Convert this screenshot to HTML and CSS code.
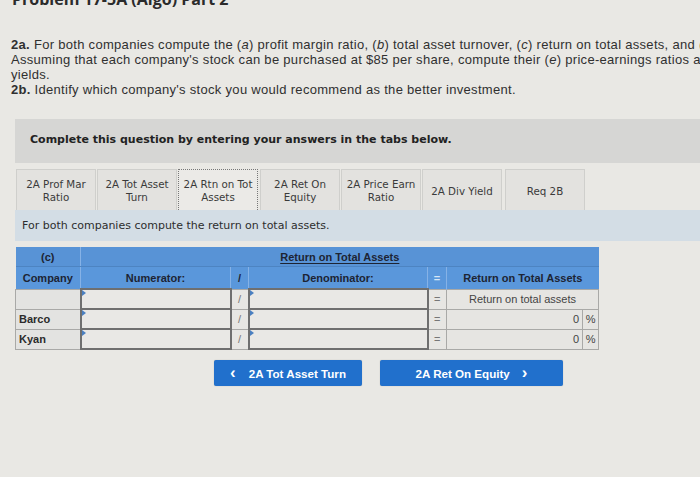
FILE: index.html
```html
<!DOCTYPE html>
<html>
<head>
<meta charset="utf-8">
<link rel="stylesheet" href="styles.css">
</head>
<body>
<div class="page">
  <h1 class="title">Problem 17-5A (Algo) Part 2</h1>
  <p class="intro">
    <b>2a.</b> For both companies compute the (<i>a</i>) profit margin ratio, (<i>b</i>) total asset turnover, (<i>c</i>) return on total assets, and (<i>d</i>) return on common stockholders' equity.<br>
    Assuming that each company's stock can be purchased at $85 per share, compute their (<i>e</i>) price-earnings ratios and dividend<br>
    yields.<br>
    <b>2b.</b> Identify which company's stock you would recommend as the better investment.
  </p>

  <div class="widget">
    <div class="instructions">Complete this question by entering your answers in the tabs below.</div>

    <div class="tabs">
      <div class="tab">2A Prof Mar<br>Ratio</div>
      <div class="tab">2A Tot Asset<br>Turn</div>
      <div class="tab active">2A Rtn on Tot<br>Assets</div>
      <div class="tab">2A Ret On<br>Equity</div>
      <div class="tab">2A Price Earn<br>Ratio</div>
      <div class="tab">2A Div Yield</div>
      <div class="tab">Req 2B</div>
    </div>

    <div class="prompt">For both companies compute the return on total assets.</div>

    <table class="grid">
      <colgroup>
        <col class="c-co"><col class="c-num"><col class="c-op"><col class="c-den"><col class="c-eq"><col class="c-res"><col class="c-pct">
      </colgroup>
      <tr class="h1">
        <th class="sep">(c)</th>
        <th colspan="6"><u>Return on Total Assets</u></th>
      </tr>
      <tr class="h2">
        <th class="sep">Company</th>
        <th class="sep">Numerator:</th>
        <th class="sep">/</th>
        <th class="sep">Denominator:</th>
        <th class="sep eqh">=</th>
        <th colspan="2">Return on Total Assets</th>
      </tr>
      <tr>
        <td class="co"></td>
        <td class="in"><span class="flag"></span></td>
        <td class="op">/</td>
        <td class="in"><span class="flag"></span></td>
        <td class="op">=</td>
        <td class="lbl" colspan="2">Return on total assets</td>
      </tr>
      <tr>
        <td class="co">Barco</td>
        <td class="in"><span class="flag"></span></td>
        <td class="op">/</td>
        <td class="in"><span class="flag"></span></td>
        <td class="op">=</td>
        <td class="val">0</td>
        <td class="pct">%</td>
      </tr>
      <tr>
        <td class="co">Kyan</td>
        <td class="in"><span class="flag"></span></td>
        <td class="op">/</td>
        <td class="in"><span class="flag"></span></td>
        <td class="op">=</td>
        <td class="val">0</td>
        <td class="pct">%</td>
      </tr>
    </table>

    <div class="nav">
      <button class="btn prev"><span class="chev">&lsaquo;</span>2A Tot Asset Turn</button>
      <button class="btn next">2A Ret On Equity<span class="chev">&rsaquo;</span></button>
    </div>
  </div>
</div>
</body>
</html>
```

FILE: styles.css
```css
html, body {
  margin: 0;
  padding: 0;
  background: #e8e7e3;
  overflow: hidden;
}
.page {
  width: 700px;
  height: 477px;
  overflow: hidden;
  background: #e9e8e4;
  color: #2a2a2a;
}
.title {
  margin: -12px 0 0 12px;
  font-family: "Open Sans", "Liberation Sans", sans-serif;
  font-size: 16px;
  font-weight: 700;
  line-height: 22px;
  white-space: nowrap;
  color: #2b2b2b;
}
.intro {
  margin: 27px 0 0 11px;
  font-family: "Liberation Sans", Arial, sans-serif;
  font-size: 13px;
  letter-spacing: 0.3px;
  line-height: 15px;
  white-space: nowrap;
  color: #303030;
}
.intro b { font-weight: 700; }
.widget {
  margin: 22px 0 0 15px;
  width: 760px;
}
.instructions {
  background: #d6d6d4;
  height: 44px;
  padding-left: 15px;
  display: flex;
  align-items: center;
  font-family: "DejaVu Sans", Verdana, sans-serif;
  font-weight: 700;
  font-size: 11px;
  color: #222;
  padding-bottom: 4px;
  box-sizing: border-box;
}
.tabs {
  display: flex;
  gap: 1px;
  margin-top: 6px;
  padding-left: 1px;
  height: 41px;
}
.tab {
  width: 80px;
  box-sizing: border-box;
  border: 1px solid #cfcfcc;
  border-bottom: none;
  background: #e3e2df;
  display: flex;
  align-items: center;
  justify-content: center;
  text-align: center;
  font-family: "DejaVu Sans", Verdana, sans-serif;
  font-size: 10.3px;
  line-height: 13px;
  color: #3a3a3a;
  padding-top: 2px;
}
.tab.active {
  border: 1px dotted #777;
  border-bottom: none;
  background: #ebeae7;
}
.tab:nth-child(4) { margin-left: 1px; }
.tab:nth-child(6) { margin-left: 0; }
.tab:nth-child(7) { margin-left: 2px; }
.prompt {
  background: #d3dde5;
  height: 31px;
  padding-left: 7px;
  display: flex;
  align-items: center;
  font-family: "DejaVu Sans", Verdana, sans-serif;
  font-size: 11px;
  color: #2d2d2d;
}
.grid {
  margin-top: 6px;
  border-collapse: collapse;
  table-layout: fixed;
  width: 583px;
  font-family: "Liberation Sans", Arial, sans-serif;
  font-size: 11px;
  color: #1e1e1e;
}
.c-co { width: 65px; }
.c-num { width: 150px; }
.c-op { width: 18px; }
.c-den { width: 179px; }
.c-eq { width: 19px; }
.c-res { width: 136px; }
.c-pct { width: 16px; }
.grid th {
  background: #5a97db;
  font-weight: 700;
  padding: 0;
  color: #1d2433;
}
.grid .h1 th { height: 19px; border-bottom: 1px solid #4d84c2; background: #5893d6; }
.grid .h2 th { height: 21px; }
.grid th.sep { border-right: 1px solid #86b2e6; }
.grid th.eqh { color: #d6e6f6; }
.grid .h1 th u { text-decoration-thickness: 1px; text-underline-offset: 2px; }
.grid td {
  height: 18px;
  padding: 0 3px;
  border: 1px solid #a9a9a7;
  background: #e6e5e2;
}
.grid td.co {
  font-weight: 700;
  color: #2b2b2b;
  background: #e3e3e1;
  padding-left: 3px;
}
.grid td.in {
  position: relative;
  border: 2px solid #6f6f6f;
  background: #e9e8e5;
}
.flag {
  position: absolute;
  left: 0;
  top: 0;
  width: 0;
  height: 0;
  border-top: 3px solid transparent;
  border-bottom: 3px solid transparent;
  border-left: 4px solid #4a7fc0;
}
.grid td.op {
  text-align: center;
  color: #777;
  padding: 0;
  background: #e7e6e3;
}
.grid td.lbl {
  text-align: center;
  color: #444;
}
.grid td.val {
  text-align: right;
  color: #444;
}
.grid td.pct {
  text-align: center;
  padding: 0;
  color: #444;
}
.nav {
  display: flex;
  gap: 18px;
  margin: 10px 0 0 199px;
}
.btn {
  height: 26px;
  border: none;
  border-radius: 2px;
  background: #2170cc;
  color: #fff;
  font-family: "Liberation Sans", Arial, sans-serif;
  font-weight: 700;
  font-size: 11.6px;
  display: flex;
  align-items: center;
  justify-content: center;
  padding: 0;
  box-shadow: 0 0 1px rgba(0,0,0,0.3);
}
.btn.prev { width: 148px; }
.btn.next { width: 183px; }
.chev {
  font-size: 17px;
  line-height: 1;
  margin-top: -2px;
}
.prev .chev { margin-right: 13px; }
.next .chev { margin-left: 12px; }
```
